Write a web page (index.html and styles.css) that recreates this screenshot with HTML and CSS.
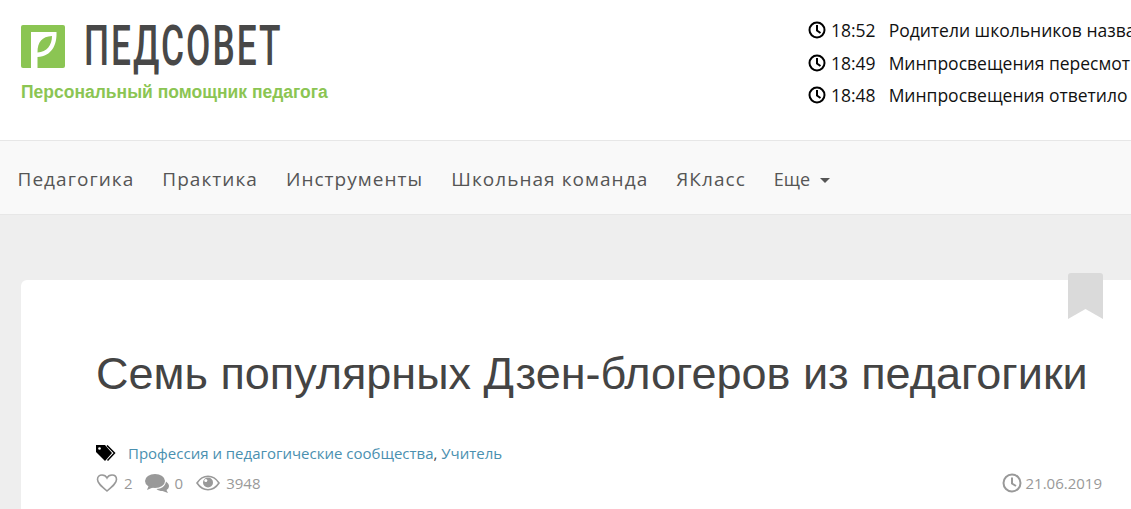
FILE: index.html
```html
<!DOCTYPE html>
<html lang="en">
<head>
<meta charset="UTF-8">
<title>Педсовет</title>
<link rel="stylesheet" href="styles.css">
</head>
<body>
<header class="top">
	<div class="brand">
		<div class="logo-row">
			<svg class="logo-mark" viewBox="0 0 44 43" width="44" height="43">
				<rect width="44" height="43" rx="2" fill="#8bc553"/>
				<path fill-rule="evenodd" d="M10 7H35.500C36 20 31 31 16.500 32V43H10ZM16.500 27.500C26 27 31 20 31 11C21 11.500 16.500 17 16.500 27.500Z" fill="#fff"/>
			</svg>
			<span class="logo-text">ПЕДСОВЕТ</span>
		</div>
		<p class="tagline">Персональный помощник педагога</p>
	</div>
	<ul class="news">
		<li class="news-item">
			<svg class="clock" viewBox="0 0 18 18" width="18" height="18"><circle cx="9" cy="9" r="7.500" fill="none" stroke="#000" stroke-width="2"/><path d="M9 4V9.500L12.500 12" fill="none" stroke="#000" stroke-width="2"/></svg>
			<span class="news-time">18:52</span>
			<span>Родители школьников назва</span>
		</li>
		<li class="news-item">
			<svg class="clock" viewBox="0 0 18 18" width="18" height="18"><circle cx="9" cy="9" r="7.500" fill="none" stroke="#000" stroke-width="2"/><path d="M9 4V9.500L12.500 12" fill="none" stroke="#000" stroke-width="2"/></svg>
			<span class="news-time">18:49</span>
			<span>Минпросвещения пересмот</span>
		</li>
		<li class="news-item">
			<svg class="clock" viewBox="0 0 18 18" width="18" height="18"><circle cx="9" cy="9" r="7.500" fill="none" stroke="#000" stroke-width="2"/><path d="M9 4V9.500L12.500 12" fill="none" stroke="#000" stroke-width="2"/></svg>
			<span class="news-time">18:48</span>
			<span>Минпросвещения ответило</span>
		</li>
	</ul>
</header>

<nav class="menu">
	<a class="menu-link">Педагогика</a>
	<a class="menu-link">Практика</a>
	<a class="menu-link">Инструменты</a>
	<a class="menu-link">Школьная команда</a>
	<a class="menu-link">ЯКласс</a>
	<a class="menu-more">Еще <span class="caret"></span></a>
</nav>

<main class="page">
	<article class="card">
		<svg class="bookmark" viewBox="0 0 35 46" width="35" height="46"><path d="M0 3Q0 0 3 0H32Q35 0 35 3V46L17.500 36L0 46Z" fill="#dadada"/></svg>
		<h1 class="title">Семь популярных Дзен-блогеров из педагогики</h1>
		<div class="tags">
			<svg class="tag-icon" viewBox="0 0 20 16" width="20" height="16">
				<path d="M0 0H9L16 8L9 16L0 7Z" fill="#000"/>
				<path d="M11 0.500L18.500 8L11.500 15.500" fill="none" stroke="#000" stroke-width="1.500"/>
				<circle cx="3.500" cy="3.500" r="1.300" fill="#fff"/>
			</svg>
			<span><a class="tag-link">Профессия и педагогические сообщества</a>, <a class="tag-link">Учитель</a></span>
		</div>
		<div class="meta">
			<div class="stats">
				<svg viewBox="0 0 22 20" width="22" height="20"><path d="M11 18C5 13 1.500 10 1.500 6.500C1.500 3.500 3.700 2 6 2C8 2 10 3 11 5C12 3 14 2 16 2C18.300 2 20.500 3.500 20.500 6.500C20.500 10 17 13 11 18Z" fill="none" stroke="#999" stroke-width="1.600"/></svg>
				<span class="stat-num stat-likes">2</span>
				<svg viewBox="0 0 24 20" width="24" height="20"><ellipse cx="10" cy="8" rx="10" ry="7" fill="#999"/><path d="M4 12L2 17L9 14Z" fill="#999"/><path d="M21 8.500C23 10 24 11.500 24 13C24 15 22.800 16.200 21.500 17L23 20L17.500 18C15 18 13 17.500 11.500 16C16.500 16 20.500 13 21 8.500Z" fill="#999"/></svg>
				<span class="stat-num stat-comments">0</span>
				<svg viewBox="0 0 24 16" width="24" height="16"><path d="M1 8C4 3.500 8 1.300 12 1.300S20 3.500 23 8C20 12.500 16 14.700 12 14.700S4 12.500 1 8Z" fill="none" stroke="#999" stroke-width="1.600"/><circle cx="12" cy="7.500" r="5" fill="#999"/><circle cx="9.800" cy="5.500" r="1.500" fill="#fff"/></svg>
				<span class="stat-num stat-views">3948</span>
			</div>
			<div class="date">
				<svg viewBox="0 0 20 20" width="20" height="20"><circle cx="10" cy="10" r="8.500" fill="none" stroke="#999" stroke-width="2"/><path d="M10 4.500V10.500L14 13" fill="none" stroke="#999" stroke-width="2"/></svg>
				<span>21.06.2019</span>
			</div>
		</div>
	</article>
</main>
</body>
</html>
```

FILE: styles.css
```css
* {
	box-sizing: border-box;
}
html, body {
	height: 100%;
}
body {
	margin: 0;
	overflow: hidden;
	background: #eee;
	font-family: "Open Sans", sans-serif;
	color: #444;
}
p, ul, h1 {
	margin: 0;
	padding: 0;
}

/* header */
.top {
	display: flex;
	height: 141px;
	background: #fff;
	border-bottom: 1px solid #e7e7e7;
	overflow: hidden;
}
.brand {
	width: 808px;
	flex: none;
	padding: 25px 0 0 21px;
}
.logo-row {
	display: flex;
	align-items: center;
	height: 43px;
}
.logo-mark {
	flex: none;
}
.logo-text {
	margin-left: 19px;
	font-family: "Roboto", sans-serif;
	font-weight: 500;
	font-size: 56px;
	line-height: 43px;
	letter-spacing: 3.200px;
	color: #484848;
	white-space: nowrap;
	transform: scaleX(0.63);
	transform-origin: left center;
}
.tagline {
	margin-top: 14px;
	font-family: "Liberation Sans", sans-serif;
	font-size: 17.500px;
	font-weight: 700;
	line-height: 20px;
	color: #8bc553;
}
.news {
	list-style: none;
	padding-top: 14px;
	flex: none;
	width: 323px;
	overflow: hidden;
}
.news-item {
	display: flex;
	align-items: center;
	height: 32.500px;
	font-size: 17.500px;
	color: #111;
	white-space: nowrap;
}
.clock {
	flex: none;
}
.news-time {
	margin: 0 13px 0 5px;
}

/* menu */
.menu {
	display: flex;
	align-items: center;
	gap: 28px;
	height: 74px;
	padding: 2px 0 0 17.500px;
	background: #f9f9f9;
	border-bottom: 1px solid #e7e7e7;
}
.menu-link {
	font-size: 19px;
	letter-spacing: 1.050px;
	color: #555;
}
.menu-more {
	font-size: 18px;
	color: #555;
}
.caret {
	display: inline-block;
	margin-left: 5px;
	vertical-align: middle;
	border-top: 5px solid #555;
	border-left: 5px solid transparent;
	border-right: 5px solid transparent;
}

/* article */
.page {
	padding: 65px 0 0 21px;
}
.card {
	position: relative;
	height: 229px;
	padding: 64px 29px 0 75px;
	background: #fff;
	border-radius: 6px 0 0 0;
}
.bookmark {
	position: absolute;
	top: -7px;
	right: 28px;
}
.title {
	font-family: "Liberation Sans", sans-serif;
	font-size: 45px;
	font-weight: 400;
	line-height: 60px;
	color: #444;
	white-space: nowrap;
}
.tags {
	display: flex;
	align-items: center;
	gap: 12px;
	margin-top: 39px;
	font-size: 15px;
	line-height: 20px;
	color: #444;
}
.tag-link {
	color: #4a90b0;
}
.meta {
	display: flex;
	justify-content: space-between;
	align-items: center;
	margin-top: 9px;
	height: 22px;
	font-size: 15px;
	color: #999;
}
.stats, .date {
	display: flex;
	align-items: center;
}
.stat-num {
	margin-left: 6px;
}
.stat-likes {
	margin-right: 12px;
}
.stat-comments {
	margin-right: 13px;
}
.date {
	gap: 4px;
}
```
